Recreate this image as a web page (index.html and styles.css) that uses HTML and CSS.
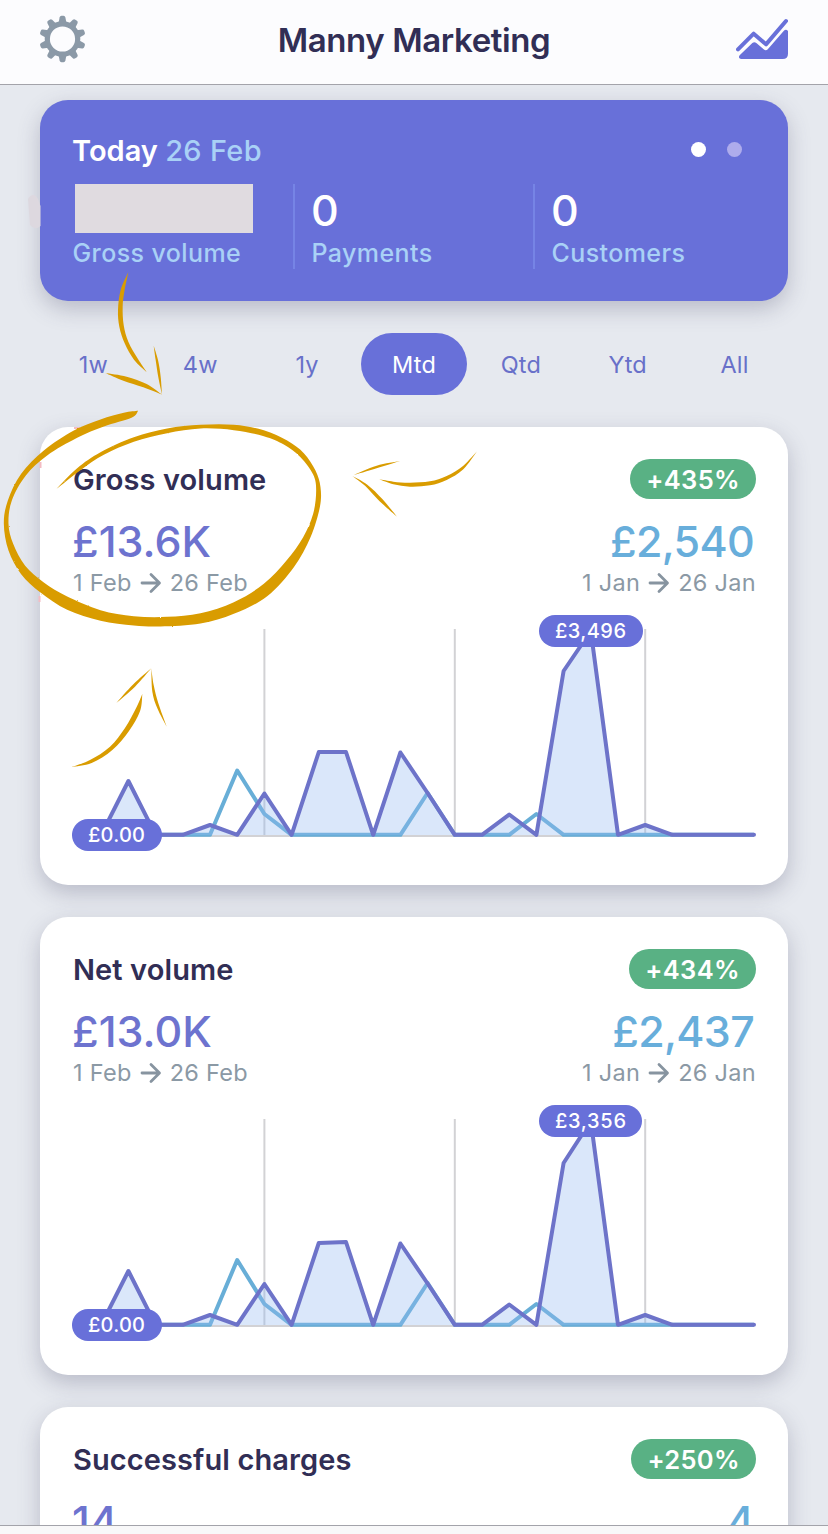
FILE: index.html
```html
<!DOCTYPE html>
<html lang="en">
<head>
<meta charset="utf-8">
<title>Manny Marketing</title>
<link rel="stylesheet" href="styles.css">
</head>
<body>
<div class="app">
  <header class="topbar">
    <svg class="gear" viewBox="-24 -24 48 48">
      <defs><path id="tooth" d="M-3.900-16 L-2.900-21.600 Q-2.600-23.200-1-23.200 H1 Q2.600-23.200 2.900-21.600 L3.900-16Z"/></defs>
      <circle r="15.200" fill="none" stroke="#8b99a7" stroke-width="5.200"/>
      <g fill="#8b99a7">
        <use href="#tooth"/><use href="#tooth" transform="rotate(36)"/><use href="#tooth" transform="rotate(72)"/><use href="#tooth" transform="rotate(108)"/><use href="#tooth" transform="rotate(144)"/><use href="#tooth" transform="rotate(180)"/><use href="#tooth" transform="rotate(216)"/><use href="#tooth" transform="rotate(252)"/><use href="#tooth" transform="rotate(288)"/><use href="#tooth" transform="rotate(324)"/>
      </g>
    </svg>
    <h1 class="brand">Manny Marketing</h1>
    <svg class="trend" viewBox="24 24 156 126">
      <path d="M30 118 L77 71 L114 103 L174 33" fill="none" stroke="#6870d9" stroke-width="12" stroke-linecap="round" stroke-linejoin="round"/>
      <path d="M35 136 L73 99 Q79 94 85 99 L107 118 Q114 124 120 117 L167 63 Q174 56 180 63 V131 Q180 147 164 147 H39 Q29 145 35 136Z" fill="#6870d9"/>
    </svg>
  </header>

  <main class="content">
    <section class="hero">
      <div class="hero-head">
        <p class="hero-title">Today <span class="hero-date">26 Feb</span></p>
        <div class="dots"><i class="dot dot-on"></i><i class="dot"></i></div>
      </div>
      <div class="stats">
        <div class="stat"><div class="redacted"></div><div class="stat-label">Gross volume</div></div>
        <div class="stat"><div class="stat-value">0</div><div class="stat-label">Payments</div></div>
        <div class="stat"><div class="stat-value">0</div><div class="stat-label">Customers</div></div>
      </div>
    </section>

    <nav class="ranges">
      <a class="range">1w</a><a class="range">4w</a><a class="range">1y</a><a class="range range-on">Mtd</a><a class="range">Qtd</a><a class="range">Ytd</a><a class="range">All</a>
    </nav>

    <section class="card">
      <div class="row head"><h2 class="title">Gross volume</h2><span class="pill">+435%</span></div>
      <div class="row values"><span class="now">£13.6K</span><span class="before">£2,540</span></div>
      <div class="row dates">
        <span class="period">1 Feb <svg class="arrow" viewBox="0 0 22 22"><path d="M2 11H19M11 2.500L19.500 11L11 19.500"/></svg> 26 Feb</span>
        <span class="period">1 Jan <svg class="arrow" viewBox="0 0 22 22"><path d="M2 11H19M11 2.500L19.500 11L11 19.500"/></svg> 26 Jan</span>
      </div>
      <svg class="chart" viewBox="72 603 684 250">
        <path class="grid" d="M264.400 629V836M454.800 629V836M645.200 629V836M74 836H754"/>
        <polyline class="line-before" points="74,834.800 210,834.800 237.200,770.500 264.400,814 291.600,834.800 400.400,834.800 427.600,793 454.800,834.800 509.200,834.800 536.400,814 563.600,834.800 754,834.800"/>
        <polygon class="area" points="74,835 101.200,835 128.400,781 155.600,835 182.800,835 210,825 237.200,835 264.400,793.500 291.600,835 318.800,752 346,752 373.200,835 400.400,752.500 427.600,793 454.800,835 482,835 509.200,814.500 536.400,835 563.600,671 590.800,631 618,835 645.200,825 672.400,835 754,835"/>
        <polyline class="line-now" points="74,834.800 101.200,834.800 128.400,781 155.600,834.800 182.800,834.800 210,825 237.200,834.800 264.400,793.500 291.600,834.800 318.800,752 346,752 373.200,834.800 400.400,752.500 427.600,793 454.800,834.800 482,834.800 509.200,814.500 536.400,834.800 563.600,671 590.800,631 618,834.800 645.200,825 672.400,834.800 754,834.800"/>
        <rect class="tag" x="72" y="819" width="90" height="32" rx="16"/>
        <text class="tag-text" x="88" y="842" textLength="57">£0.00</text>
        <rect class="tag" x="539" y="615" width="104" height="32" rx="16"/>
        <text class="tag-text" x="555" y="638" textLength="71">£3,496</text>
      </svg>
    </section>

    <section class="card">
      <div class="row head"><h2 class="title">Net volume</h2><span class="pill">+434%</span></div>
      <div class="row values"><span class="now">£13.0K</span><span class="before">£2,437</span></div>
      <div class="row dates">
        <span class="period">1 Feb <svg class="arrow" viewBox="0 0 22 22"><path d="M2 11H19M11 2.500L19.500 11L11 19.500"/></svg> 26 Feb</span>
        <span class="period">1 Jan <svg class="arrow" viewBox="0 0 22 22"><path d="M2 11H19M11 2.500L19.500 11L11 19.500"/></svg> 26 Jan</span>
      </div>
      <svg class="chart" viewBox="72 603 684 250">
        <path class="grid" d="M264.400 629V836M454.800 629V836M645.200 629V836M74 836H754"/>
        <polyline class="line-before" points="74,834.800 210,834.800 237.200,770 264.400,814 291.600,834.800 400.400,834.800 427.600,793 454.800,834.800 509.200,834.800 536.400,814 563.600,834.800 754,834.800"/>
        <polygon class="area" points="74,835 101.200,835 128.400,781 155.600,835 182.800,835 210,825 237.200,835 264.400,794 291.600,835 318.800,753 346,752 373.200,835 400.400,753.500 427.600,793.500 454.800,835 482,835 509.200,814.500 536.400,835 563.600,673 590.800,631 618,835 645.200,825 672.400,835 754,835"/>
        <polyline class="line-now" points="74,834.800 101.200,834.800 128.400,781 155.600,834.800 182.800,834.800 210,825 237.200,834.800 264.400,794 291.600,834.800 318.800,753 346,752 373.200,834.800 400.400,753.500 427.600,793.500 454.800,834.800 482,834.800 509.200,814.500 536.400,834.800 563.600,673 590.800,631 618,834.800 645.200,825 672.400,834.800 754,834.800"/>
        <rect class="tag" x="72" y="819" width="90" height="32" rx="16"/>
        <text class="tag-text" x="88" y="842" textLength="57">£0.00</text>
        <rect class="tag" x="539" y="615" width="103" height="32" rx="16"/>
        <text class="tag-text" x="555" y="638" textLength="71">£3,356</text>
      </svg>
    </section>

    <section class="card">
      <div class="row head"><h2 class="title">Successful charges</h2><span class="pill">+250%</span></div>
      <div class="row values"><span class="now">14</span><span class="before">4</span></div>
    </section>
  </main>
  <footer class="bottombar"></footer>

  <svg class="ink" viewBox="0 0 828 1534">
    <defs>
      <filter id="rough" x="-5%" y="-5%" width="110%" height="110%">
        <feTurbulence type="fractalNoise" baseFrequency=".25" numOctaves="2" seed="4"/>
        <feDisplacementMap in="SourceGraphic" scale="1.600" xChannelSelector="R" yChannelSelector="G"/>
      </filter>
    </defs>
    <path d="M28 199 Q33 191 38 199 L40.500 206 V226 Q35 231 30 225Z" fill="#ddd8df"/>
    <path d="M74 428H80M40.500 462V468M39.500 596V602" fill="none" stroke="#f3bcc3" stroke-width="2"/>
    <g filter="url(#rough)"><g transform="translate(.5 400.5) scale(.33333)">
      <path data-a="413,31 370,37 300,57 220,90 130,150 62,220 22,300 10,370 24,450 62,521 120,576 200,628 300,661 400,675 480,678 600,669 700,640 800,587 880,500 930,410 958,320 960,260 945,210 910,158 860,120 790,89 700,73 600,73 500,84 400,110 300,155 230,203 168,265" data-b="168,265 240,209 310,163 400,124 500,98 600,84 700,89 790,107 850,132 900,170 938,222 947,270 938,340 908,410 858,480 790,550 700,605 600,638 500,649 400,647 300,629 200,588 130,546 74,496 38,430 24,370 34,300 76,225 140,165 230,112 310,78 393,52 413,31"/>
    </g></g>
    <g transform="translate(0 260) scale(.33333)">
      <path data-a="385,37 362,90 354,150 358,200 374,250 402,299 440,336" data-b="440,336 414,297 385,245 371,195 368,140 373,95 385,37"/>
      <path data-a="461,257 467,300 475,352 486,404" data-b="486,404 482,350 474,300 461,257"/>
      <path data-a="316,339 380,350 440,372 486,404" data-b="486,404 430,382 370,362 316,339"/>
    </g>
    <g transform="translate(340 320) scale(.33333)">
      <path data-a="411,394 370,437 320,468 270,484 210,488 160,485 118,478" data-b="118,478 160,493 210,500 270,496 320,480 370,448 411,394"/>
      <path data-a="36,467 110,437 180,423" data-b="180,423 110,445 36,467"/>
      <path data-a="36,467 82,494 127,537 171,590" data-b="171,590 118,543 76,498 36,467"/>
    </g>
    <g transform="translate(40 600) scale(.33333)">
      <path data-a="95,501 150,480 210,440 255,384 288,325 307,282" data-b="307,282 300,334 267,393 217,450 155,489 95,501"/>
      <path data-a="229,309 280,253 334,205" data-b="334,205 285,260 229,309"/>
      <path data-a="334,205 341,255 355,310 380,380" data-b="380,380 352,325 337,275 334,205"/>
    </g>
  </svg>
</div>
<script src="ink.js"></script>
</body>
</html>
```
FILE: ink.js
```js
// Builds each brush stroke from its two edges, smoothed as Catmull-Rom splines.
function edge(text) {
  const p = text.split(' ').map(s => s.split(',').map(Number));
  let d = '';
  for (let i = 0; i < p.length - 1; i++) {
    const a = p[i - 1] || p[i], b = p[i], c = p[i + 1], e = p[i + 2] || c;
    d += 'C' + [b[0] + (c[0] - a[0]) / 6, b[1] + (c[1] - a[1]) / 6,
      c[0] - (e[0] - b[0]) / 6, c[1] - (e[1] - b[1]) / 6, c[0], c[1]].join(' ');
  }
  return d;
}
document.querySelectorAll('.ink path[data-a]').forEach(el => {
  el.setAttribute('d', 'M' + el.dataset.a.split(' ')[0] + edge(el.dataset.a) + edge(el.dataset.b) + 'Z');
});
```
FILE: styles.css
```css
* { box-sizing: border-box; margin: 0; padding: 0; }
body { font-family: Inter, "Liberation Sans", sans-serif; background: #e6e9ef; }
.app { position: relative; display: flex; flex-direction: column; width: 828px; height: 1534px; overflow: hidden; }
.topbar { display: flex; justify-content: space-between; align-items: center; flex: none; height: 85px; padding: 0 40px 6px 38px; background: #fcfcfe; border-bottom: 1px solid #a3a3aa; }
.gear { width: 49px; height: 48px; }
.brand { padding: 1px 0 0 5px; font-size: 33px; font-weight: 600; line-height: 40px; color: #312e55; letter-spacing: -.4px; white-space: nowrap; }
.trend { width: 52px; height: 42px; }
.content { flex: 1; min-height: 0; overflow: hidden; padding: 15px 40px 0; }
.hero { height: 201px; padding: 32px; border-radius: 28px; background: #6870d9; box-shadow: 0 8px 22px rgba(70, 70, 100, .28); }
.hero-head { display: flex; justify-content: space-between; height: 52px; }
.hero-title { font-size: 29px; line-height: 38px; font-weight: 600; color: #fff; white-space: nowrap; }
.hero-date { font-weight: 500; letter-spacing: .3px; color: #a9d1f6; }
.dots { display: flex; gap: 21px; padding: 10px 14px 0 0; }
.dot { width: 15px; height: 15px; border-radius: 50%; background: #aeacec; }
.dot-on { background: #fff; }
.stats { display: grid; grid-template-columns: 221px 240px 1fr; height: 85px; }
.stat + .stat { border-left: 2px solid #7684e5; padding-left: 16px; }
.stat-value { height: 54px; line-height: 52px; font-size: 43px; font-weight: 500; color: #fff; }
.stat-label { padding-left: .5px; font-size: 25px; line-height: 31px; font-weight: 500; letter-spacing: .4px; color: #a9d1f6; white-space: nowrap; }
.redacted { width: 178px; height: 49px; margin: 0 0 5px 3px; background: #e0dbe0; }
.ranges { display: grid; grid-template-columns: repeat(7, 1fr); height: 62px; margin: 32px 0; }
.range { padding-top: 2px; text-align: center; font-size: 23.500px; line-height: 60px; letter-spacing: .2px; color: #6870c9; }
.range-on { background: #6870d9; color: #fff; border-radius: 31px; }
.card { height: 458px; padding: 32px; margin-bottom: 32px; border-radius: 28px; background: #fff; box-shadow: 0 8px 22px rgba(70, 70, 100, .28); }
.row { display: flex; justify-content: space-between; white-space: nowrap; }
.head { height: 40px; line-height: 40px; }
.title { padding-left: 1px; font-size: 29px; line-height: 42px; font-weight: 600; letter-spacing: .1px; color: #312e55; }
.pill { padding: 1px 16px 0; line-height: 39px; border-radius: 20px; background: #59b184; color: #fff; font-size: 25.500px; font-weight: 600; letter-spacing: .35px; }
.values { margin-top: 18px; height: 50px; line-height: 49px; font-size: 43px; font-weight: 500; }
.now { color: #6d73cf; }
.before { padding-right: 2px; letter-spacing: -.7px; color: #68aedb; }
.dates { height: 32px; line-height: 32px; font-size: 23.500px; letter-spacing: .3px; color: #8b99a5; }
.period { display: flex; align-items: center; gap: 8px; }
.period:first-child { padding-left: 1px; }
.arrow { width: 22px; height: 22px; fill: none; stroke: #8794a0; stroke-width: 2.800; stroke-linecap: round; stroke-linejoin: round; }
.chart { display: block; width: 684px; height: 250px; margin-top: 4px; }
.grid { fill: none; stroke: #d2d2d5; stroke-width: 2; }
.line-before { fill: none; stroke: #68aed7; stroke-width: 4; stroke-linejoin: round; }
.area { fill: #95baf1; fill-opacity: .35; }
.line-now { fill: none; stroke: #6d73c9; stroke-width: 4; stroke-linejoin: round; stroke-linecap: round; }
.tag { fill: #6870d9; }
.tag-text { fill: #fff; font-size: 20px; font-weight: 500; }
.bottombar { flex: none; height: 9px; background: #f8f8f9; border-top: 1px solid #a3a3aa; }
.ink { position: absolute; inset: 0; width: 828px; height: 1534px; fill: #d99c00; pointer-events: none; }
```
